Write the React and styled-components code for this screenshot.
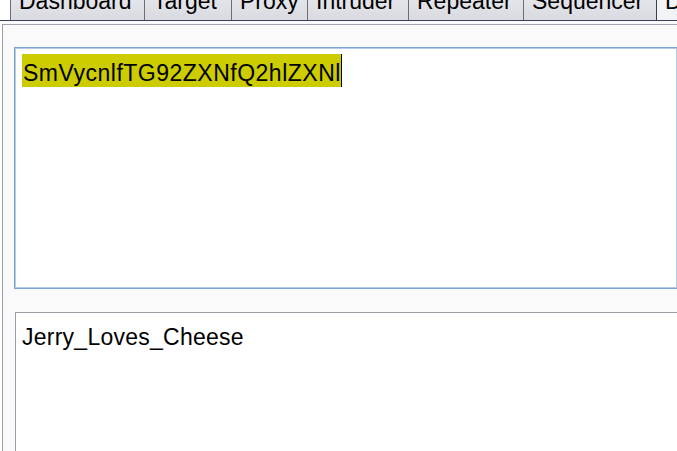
import React from 'react';
import styled, { createGlobalStyle } from 'styled-components';

const GlobalStyle = createGlobalStyle`
  html, body {
    margin: 0;
    padding: 0;
    background: #ffffff;
    overflow: hidden;
  }
  body {
    font-family: "Liberation Sans", Arial, sans-serif;
  }
`;

const Window = styled.div`
  width: 677px;
  height: 451px;
  display: flex;
  flex-direction: column;
  overflow: hidden;
`;

const TabStrip = styled.div`
  display: flex;
  height: 20px;
  padding-left: 10px;
  flex-shrink: 0;
  overflow: hidden;
`;

const Tab = styled.div`
  flex-shrink: 0;
  box-sizing: border-box;
  width: ${p => p.$w}px;
  height: 20px;
  border-left: 1px solid ${p => (p.$active ? '#3c3f4a' : '#6d6e75')};
  background: ${p => (p.$active ? '#f2f3f6' : 'linear-gradient(#e4e5ea, #d9dae1)')};
  color: #000;
  font-size: 23px;
  line-height: 20px;
  padding-left: 8px;
  white-space: nowrap;
  overflow: hidden;
`;

const TabLabel = styled.span`
  display: block;
  margin-top: -9px;
`;

const Divider = styled.div`
  flex-shrink: 0;
  height: 1px;
  background: #3d4150;
`;

const Gap = styled.div`
  flex-shrink: 0;
  height: 3px;
  background: #f7f9fc;
`;

const Panel = styled.div`
  flex: 1;
  margin-left: 2px;
  border-top: 1px solid #a3a6b0;
  border-left: 1px solid #9a9ca6;
  background: #fafafa;
  padding: 22px 0 0 11px;
  display: flex;
  flex-direction: column;
`;

const Editor = styled.div`
  box-sizing: border-box;
  flex-shrink: 0;
  height: ${p => p.$h}px;
  margin-left: ${p => p.$indent || 0}px;
  margin-top: ${p => p.$top || 0}px;
  background: #ffffff;
  border: 1px solid ${p => (p.$focused ? '#7ea3d3' : '#9a9ca6')};
  border-right: none;
  box-shadow: ${p => (p.$focused ? 'inset 0 0 0 1px #b4cbe8' : 'none')};
  padding: ${p => p.$pad};
  font-size: 23px;
  color: #000;
  white-space: nowrap;
`;

const Selected = styled.span`
  display: inline-block;
  height: 33px;
  line-height: 39px;
  padding-left: 1px;
  background: #cccc00;
  letter-spacing: 0.5px;
`;

const Caret = styled.span`
  display: inline-block;
  width: 1px;
  height: 33px;
  background: #000;
  vertical-align: top;
`;

const Plain = styled.span`
  display: block;
  line-height: 26px;
  letter-spacing: 0.25px;
`;

const tabs = [
  { label: 'Dashboard', w: 134 },
  { label: 'Target', w: 87 },
  { label: 'Proxy', w: 76 },
  { label: 'Intruder', w: 101 },
  { label: 'Repeater', w: 115 },
  { label: 'Sequencer', w: 133 },
  { label: 'Decoder', w: 120, active: true },
];

export default function App() {
  return (
    <Window>
      <GlobalStyle />
      <TabStrip>
        {tabs.map(t => (
          <Tab key={t.label} $w={t.w} $active={t.active}>
            <TabLabel>{t.label}</TabLabel>
          </Tab>
        ))}
      </TabStrip>
      <Divider />
      <Gap />
      <Panel>
        <Editor $focused $h={242} $pad="6px 0 0 7px">
          <Selected>SmVycnlfTG92ZXNfQ2hlZXNl</Selected>
          <Caret />
        </Editor>
        <Editor $h={160} $indent={1} $top={23} $pad="11px 0 0 6px">
          <Plain>Jerry_Loves_Cheese</Plain>
        </Editor>
      </Panel>
    </Window>
  );
}
